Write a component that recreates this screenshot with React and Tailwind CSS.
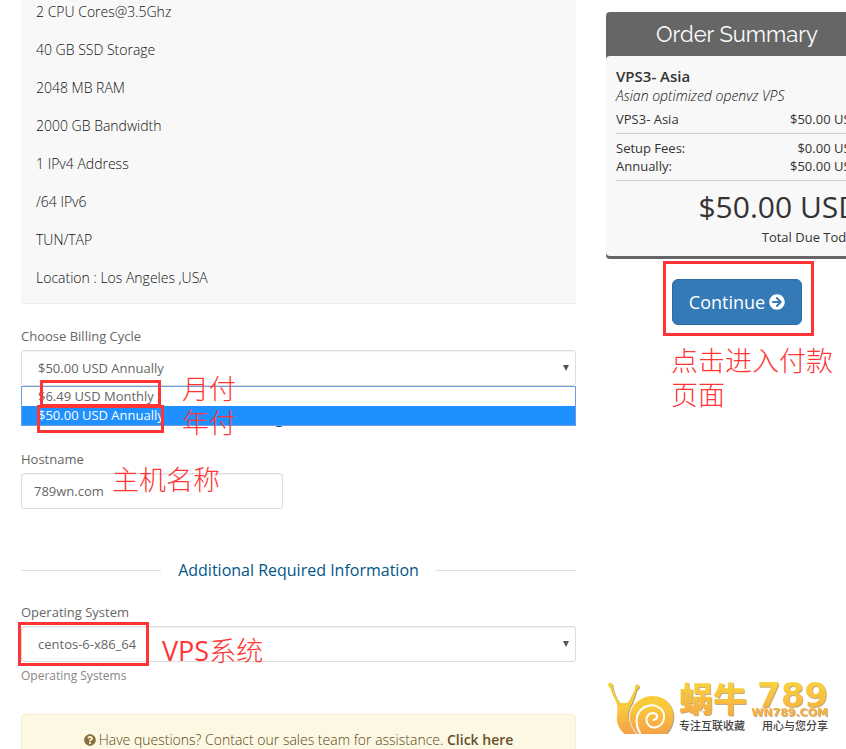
import React from "react";
import { FaArrowCircleRight, FaQuestionCircle } from "react-icons/fa";

const features = [
  "2 CPU Cores@3.5Ghz",
  "40 GB SSD Storage",
  "2048 MB RAM",
  "2000 GB Bandwidth",
  "1 IPv4 Address",
  "/64 IPv6",
  "TUN/TAP",
  "Location : Los Angeles ,USA",
];

const billingCycles = [
  { value: "monthly", label: "$6.49 USD Monthly" },
  { value: "annually", label: "$50.00 USD Annually" },
];

// Handwritten-style red note that floats over the form
function Note({ className, children }) {
  return (
    <span
      className={`pointer-events-none absolute z-20 font-['Open_Sans','Noto_Sans_CJK_SC',sans-serif] text-[27px] font-light leading-[34px] text-[#ff3535] ${className}`}
    >
      {children}
    </span>
  );
}

function Marker({ className }) {
  return <span className={`pointer-events-none absolute z-20 border-3 border-[#ff3535] ${className}`} />;
}

function SubHeading({ children }) {
  return (
    <div className="flex items-center text-base leading-5 text-[#058]">
      <span className="h-px flex-1 bg-[#ddd]" />
      <h2 className="px-[17px]">{children}</h2>
      <span className="h-px flex-1 bg-[#ddd]" />
    </div>
  );
}

function SelectBox({ id, defaultValue, children }) {
  return (
    <div className="relative">
      <select
        id={id}
        defaultValue={defaultValue}
        className="block h-9 w-full appearance-none rounded-[3px] border border-[#ddd] bg-white px-4 text-[13px] text-[#666] shadow-[inset_0_1px_1px_rgba(0,0,0,0.06)]"
      >
        {children}
      </select>
      <svg className="pointer-events-none absolute right-[7px] top-[15px] h-1.5 w-1.5" viewBox="0 0 6 6" aria-hidden="true">
        <path d="M0 0h6L3 6z" fill="#555" />
      </svg>
    </div>
  );
}

function OrderSummary() {
  return (
    <aside className="-mr-[22px] w-[262px] shrink-0 pt-3">
      <div className="rounded bg-[#666] pb-[3px]">
        <h2 className="text-center font-['Raleway','Lato',sans-serif] text-[22px] leading-[44px] text-[#fcfcfc]">
          Order Summary
        </h2>
        <div className="rounded bg-[#f8f8f8] pb-2.5 pl-2.5 pr-2 pt-2.5 text-[13px] leading-[18px]">
          <p className="text-[15px] font-semibold leading-5">VPS3- Asia</p>
          <p className="text-sm font-light italic leading-5 text-[#111]">Asian optimized openvz VPS</p>
          <div className="mt-1 flex justify-between border-b border-[#ccc] pb-[5px]">
            <span>VPS3- Asia</span>
            <span>$50.00 USD</span>
          </div>
          <div className="border-b border-[#ccc] pb-[5px] pt-[5px]">
            <div className="flex justify-between">
              <span>Setup Fees:</span>
              <span>$0.00 USD</span>
            </div>
            <div className="flex justify-between">
              <span>Annually:</span>
              <span>$50.00 USD</span>
            </div>
          </div>
          <div className="pt-[5px] text-right">
            <p className="text-[30px] leading-[42px]">$50.00 USD</p>
            <p>Total Due Today</p>
          </div>
        </div>
      </div>
      <div className="relative mt-5 text-center">
        <button
          type="button"
          className="inline-flex h-[46px] items-center gap-1 rounded-md border border-[#2e6da4] bg-[#337ab7] px-4 text-lg text-white"
        >
          Continue
          <FaArrowCircleRight className="h-4 w-4" />
        </button>
        <Marker className="-top-[18px] left-[57px] h-[75px] w-[151px]" />
        <Note className="left-[65px] top-[65px] w-[170px] text-left">点击进入付款页面</Note>
      </div>
    </aside>
  );
}

function SnailLogo() {
  return (
    <svg className="h-[52px] w-[68px]" viewBox="0 0 68 52" aria-hidden="true">
      <defs>
        <linearGradient id="snail" x1="0" y1="0" x2="0" y2="52" gradientUnits="userSpaceOnUse">
          <stop offset="0" stopColor="#f3d22e" />
          <stop offset="0.5" stopColor="#f9c93c" />
          <stop offset="1" stopColor="#f5a048" />
        </linearGradient>
      </defs>
      <g filter="drop-shadow(1px 1px 0 #b3a184)">
        <path
          d="M2 1C4 0 6 1.500 5.500 4C6.500 10 9 16 12.500 20.500C15 21.500 19 21.500 21.500 20C24.500 15 26.500 10 28 6.500C27.500 3.500 29.500 1.500 31.500 3C32.500 5 31.500 7 29.500 7.500C28.500 12 26.500 17 25 21.500C21 27 20 34 22 40C23.500 45 26 49 29.500 52H18C12 47 9 41 10 34C10.500 29 11 24 9 19.500C6 14 4 9 3 5C1 4.500 .5 2.500 2 1Z"
          fill="url(#snail)"
        />
        <path
          d="M31 52C22 44 20 32 27 23C34 14 47 11 57 17C68 24 70 40 59 52Z"
          fill="url(#snail)"
        />
      </g>
      <path
        d="M33 51C27 41 29 29 38 25C48 20 58 27 57 36C56 45 46 48 41.500 43C37 37 41 31 46 31C51 31.500 52 37 46.500 38"
        fill="none"
        stroke="#fff"
        strokeWidth="2"
        strokeLinecap="round"
      />
    </svg>
  );
}

function Watermark() {
  return (
    <div className="pointer-events-none absolute bottom-[15px] right-[18px] flex gap-1 whitespace-nowrap font-['Inter','Noto_Sans_CJK_SC',sans-serif]">
      <SnailLogo />
      <div className="w-[149px]">
        <div className="flex h-9 justify-between bg-linear-to-b from-[#f8d23c] to-[#f8a940] bg-clip-text font-black text-transparent drop-shadow-[1px_1px_0_#c4ab80]">
          <span className="text-[34px] leading-9">蜗牛</span>
          <span className="flex flex-col items-end font-['DejaVu_Sans',sans-serif] font-bold">
            <span className="text-[34px] leading-[26px]">789</span>
            <span className="text-[11px] leading-[10px]">WN789.COM</span>
          </span>
        </div>
        <div className="flex justify-between pt-0.5 text-[11px] font-medium leading-3 text-[#444]">
          <span>专注互联收藏</span>
          <span>用心与您分享</span>
        </div>
      </div>
    </div>
  );
}

export default function App() {
  return (
    <div className="relative flex h-screen items-start gap-[30px] overflow-hidden bg-white pl-[21px] font-['Open_Sans',sans-serif] text-[#333]">
      <main className="min-w-0 flex-1 text-[13px] leading-[18px] text-[#666]">
        <ul className="flex flex-col gap-[18px] border-b border-[#eee] bg-[#f8f8f8] px-[15px] pb-[15px] pt-0.5 text-sm font-light leading-5 text-[#111]">
          {features.map((feature) => (
            <li key={feature}>{feature}</li>
          ))}
        </ul>

        <div className="relative mt-[23px]">
          <label htmlFor="billingcycle" className="mb-[5px] block">
            Choose Billing Cycle
          </label>
          <SelectBox id="billingcycle" defaultValue="annually">
            {billingCycles.map((cycle) => (
              <option key={cycle.value} value={cycle.value}>
                {cycle.label}
              </option>
            ))}
          </SelectBox>
          {/* Opened option list */}
          <ul
            role="listbox"
            aria-label="Choose Billing Cycle"
            className="absolute inset-x-0 top-full z-10 border border-[#6f9bdc] bg-white leading-[19px]"
          >
            <li role="option" aria-selected="false" className="px-4">
              {billingCycles[0].label}
            </li>
            <li role="option" aria-selected="true" className="bg-[#1e90ff] px-4 text-white">
              {billingCycles[1].label}
            </li>
          </ul>
          <Marker className="left-[19px] top-[53px] h-[27px] w-[121px]" />
          <Marker className="left-4 top-[78px] h-7 w-[127px]" />
          <Note className="left-[161px] top-[45px]">月付</Note>
          <Note className="left-[161px] top-[79px]">年付</Note>
        </div>

        <div className="mt-[21px]">
          <SubHeading>Configure Server</SubHeading>
        </div>

        <div className="relative mt-[23px]">
          <label htmlFor="hostname" className="mb-[5px] block">
            Hostname
          </label>
          <input
            id="hostname"
            type="text"
            defaultValue="789wn.com"
            className="block h-9 w-[262px] rounded-[3px] border border-[#ddd] bg-white px-3 text-[13px] text-[#666] shadow-[inset_0_1px_1px_rgba(0,0,0,0.06)]"
          />
          <Note className="left-[91px] top-[13px]">主机名称</Note>
        </div>

        <div className="mt-[51px]">
          <SubHeading>Additional Required Information</SubHeading>
        </div>

        <div className="relative mt-[23px]">
          <label htmlFor="os" className="mb-[5px] block">
            Operating System
          </label>
          <SelectBox id="os" defaultValue="centos-6-x86_64">
            <option value="centos-6-x86_64">centos-6-x86_64</option>
          </SelectBox>
          <p className="mt-[5px] text-xs leading-[18px] text-[#888]">Operating Systems</p>
          <Marker className="-left-[3px] top-[19px] h-11 w-[131px]" />
          <Note className="left-[141px] top-[31px]">
            <span className="font-normal">VPS</span>系统
          </Note>
        </div>

        <div className="mt-[29px] rounded border border-[#faebcc] bg-[#fcf8e3] p-[15px] text-center text-sm font-light leading-5 text-[#5f4514]">
          <FaQuestionCircle className="mr-[3px] inline h-3 w-3 align-[-1px] text-[#8a6d3b]" />
          Have questions? Contact our sales team for assistance.{" "}
          <a href="#contact" className="font-semibold text-[#66512c]">
            Click here
          </a>
        </div>
      </main>

      <OrderSummary />
      <Watermark />
    </div>
  );
}
